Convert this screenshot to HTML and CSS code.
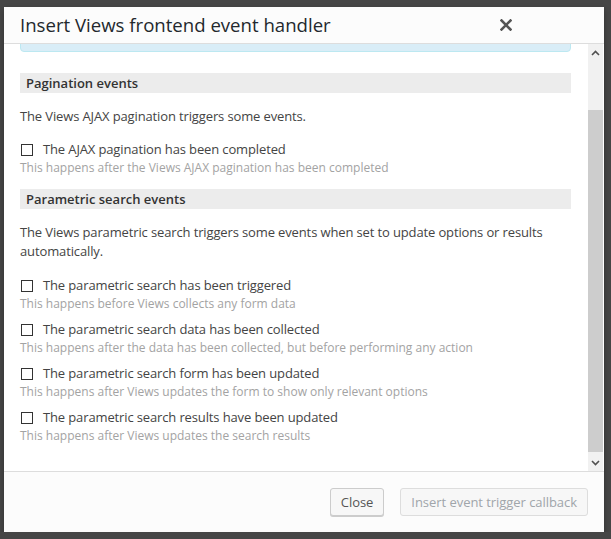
FILE: index.html
```html
<!DOCTYPE html>
<html>
<head>
<meta charset="utf-8">
<link rel="stylesheet" href="styles.css">
</head>
<body>
<div class="dialog">
  <div class="dlg-head">
    <h1 class="dlg-title">Insert Views frontend event handler</h1>
    <span class="dlg-close" aria-label="Close">
      <svg width="12" height="12" viewBox="0 0 12 12"><path d="M1.5 1.5 L10.5 10.5 M10.5 1.5 L1.5 10.5" stroke="#555" stroke-width="2.6" stroke-linecap="square"/></svg>
    </span>
  </div>
  <div class="dlg-body">
    <div class="scroll-view">
      <div class="scroll-inner">
        <div class="info-box"></div>
        <h2 class="section-head">Pagination events</h2>
        <p class="para">The Views AJAX pagination triggers some events.</p>
        <div class="item">
          <label class="item-label"><span class="cb"></span>The AJAX pagination has been completed</label>
          <div class="item-desc">This happens after the Views AJAX pagination has been completed</div>
        </div>
        <h2 class="section-head">Parametric search events</h2>
        <p class="para para-last">The Views parametric search triggers some events when set to update options or results automatically.</p>
        <div class="item">
          <label class="item-label"><span class="cb"></span>The parametric search has been triggered</label>
          <div class="item-desc">This happens before Views collects any form data</div>
        </div>
        <div class="item">
          <label class="item-label"><span class="cb"></span>The parametric search data has been collected</label>
          <div class="item-desc">This happens after the data has been collected, but before performing any action</div>
        </div>
        <div class="item">
          <label class="item-label"><span class="cb"></span>The parametric search form has been updated</label>
          <div class="item-desc">This happens after Views updates the form to show only relevant options</div>
        </div>
        <div class="item">
          <label class="item-label"><span class="cb"></span>The parametric search results have been updated</label>
          <div class="item-desc">This happens after Views updates the search results</div>
        </div>
      </div>
    </div>
    <div class="scrollbar">
      <div class="sb-arrow">
        <svg width="9" height="6" viewBox="0 0 9 6"><path d="M1 5 L4.5 1.5 L8 5" fill="none" stroke="#505050" stroke-width="1.6"/></svg>
      </div>
      <div class="sb-track"><div class="sb-thumb"></div></div>
      <div class="sb-arrow">
        <svg width="9" height="6" viewBox="0 0 9 6"><path d="M1 1 L4.5 4.5 L8 1" fill="none" stroke="#505050" stroke-width="1.6"/></svg>
      </div>
    </div>
  </div>
  <div class="dlg-foot">
    <button class="btn">Close</button>
    <button class="btn btn-disabled" disabled>Insert event trigger callback</button>
  </div>
</div>
</body>
</html>
```

FILE: styles.css
```css
html, body {
  margin: 0;
  padding: 0;
  background: #464646;
}
body {
  padding: 7px 0 0 4px;
  font-family: "Open Sans", "Noto Sans", sans-serif;
  color: #444;
}
.dialog {
  width: 600px;
  height: 525px;
  background: #fff;
  display: flex;
  flex-direction: column;
  box-shadow: 0 3px 6px rgba(0,0,0,0.3);
}
.dlg-head {
  height: 36px;
  background: #fcfcfc;
  border-bottom: 1px solid #ddd;
  display: flex;
  align-items: center;
  justify-content: space-between;
  padding: 0 16px;
  flex: none;
}
.dlg-title {
  margin: 0;
  font-size: 18.6px;
  font-weight: 400;
  color: #23282d;
  line-height: 36px;
}
.dlg-close {
  display: flex;
  margin-right: 76px;
}
.dlg-body {
  flex: none;
  height: 427px;
  display: flex;
}
.scroll-view {
  flex: 1;
  overflow: hidden;
  padding: 0 17px 0 16px;
}
.scroll-inner {
  margin-top: -32px;
}
.info-box {
  height: 38px;
  background: #d9edf7;
  border: 1px solid #bce8f1;
  border-radius: 4px;
  margin-bottom: 21px;
}
.section-head {
  margin: 0;
  background: #ececec;
  height: 20px;
  line-height: 20px;
  padding: 0 6px;
  font-size: 13px;
  font-weight: 600;
  color: #333;
}
.para {
  margin: 14px 0 14px;
  font-size: 13px;
  line-height: 19px;
  letter-spacing: -0.13px;
}
.para-last {
  margin-bottom: 15px;
}
.item {
  margin-bottom: 7px;
}
.item-label {
  display: flex;
  align-items: center;
  font-size: 13px;
  line-height: 19px;
  letter-spacing: -0.13px;
  color: #444;
}
.cb {
  width: 10px;
  height: 10px;
  border: 1px solid #333;
  margin: 0 10px 0 1px;
  background: #fff;
  flex: none;
}
.item-desc {
  font-size: 12px;
  line-height: 18px;
  color: #a3a3a3;
}
.item + .section-head {
  margin-top: 12px;
}
.scrollbar {
  width: 15px;
  margin-right: 1px;
  background: #f1f1f1;
  display: flex;
  flex-direction: column;
  flex: none;
}
.sb-arrow {
  height: 17px;
  display: flex;
  align-items: center;
  justify-content: center;
}
.sb-track {
  flex: 1;
  padding-top: 49px;
  padding-bottom: 2px;
  display: flex;
  flex-direction: column;
}
.sb-thumb {
  flex: 1;
  background: #cdcdcd;
}
.dlg-foot {
  flex: 1;
  background: #fcfcfc;
  border-top: 1px solid #ddd;
  display: flex;
  justify-content: flex-end;
  align-items: center;
  padding: 0 16px;
  gap: 16px;
}
.btn {
  height: 28px;
  padding: 0 10px;
  font-family: "Open Sans", "Noto Sans", sans-serif;
  font-size: 13px;
  line-height: 26px;
  letter-spacing: -0.05px;
  color: #555;
  background: #f7f7f7;
  border: 1px solid #ccc;
  border-radius: 3px;
  box-shadow: 0 1px 0 #ccc;
}
.btn-disabled {
  color: #a0a5aa;
  border-color: #ddd;
  box-shadow: none;
}
```
